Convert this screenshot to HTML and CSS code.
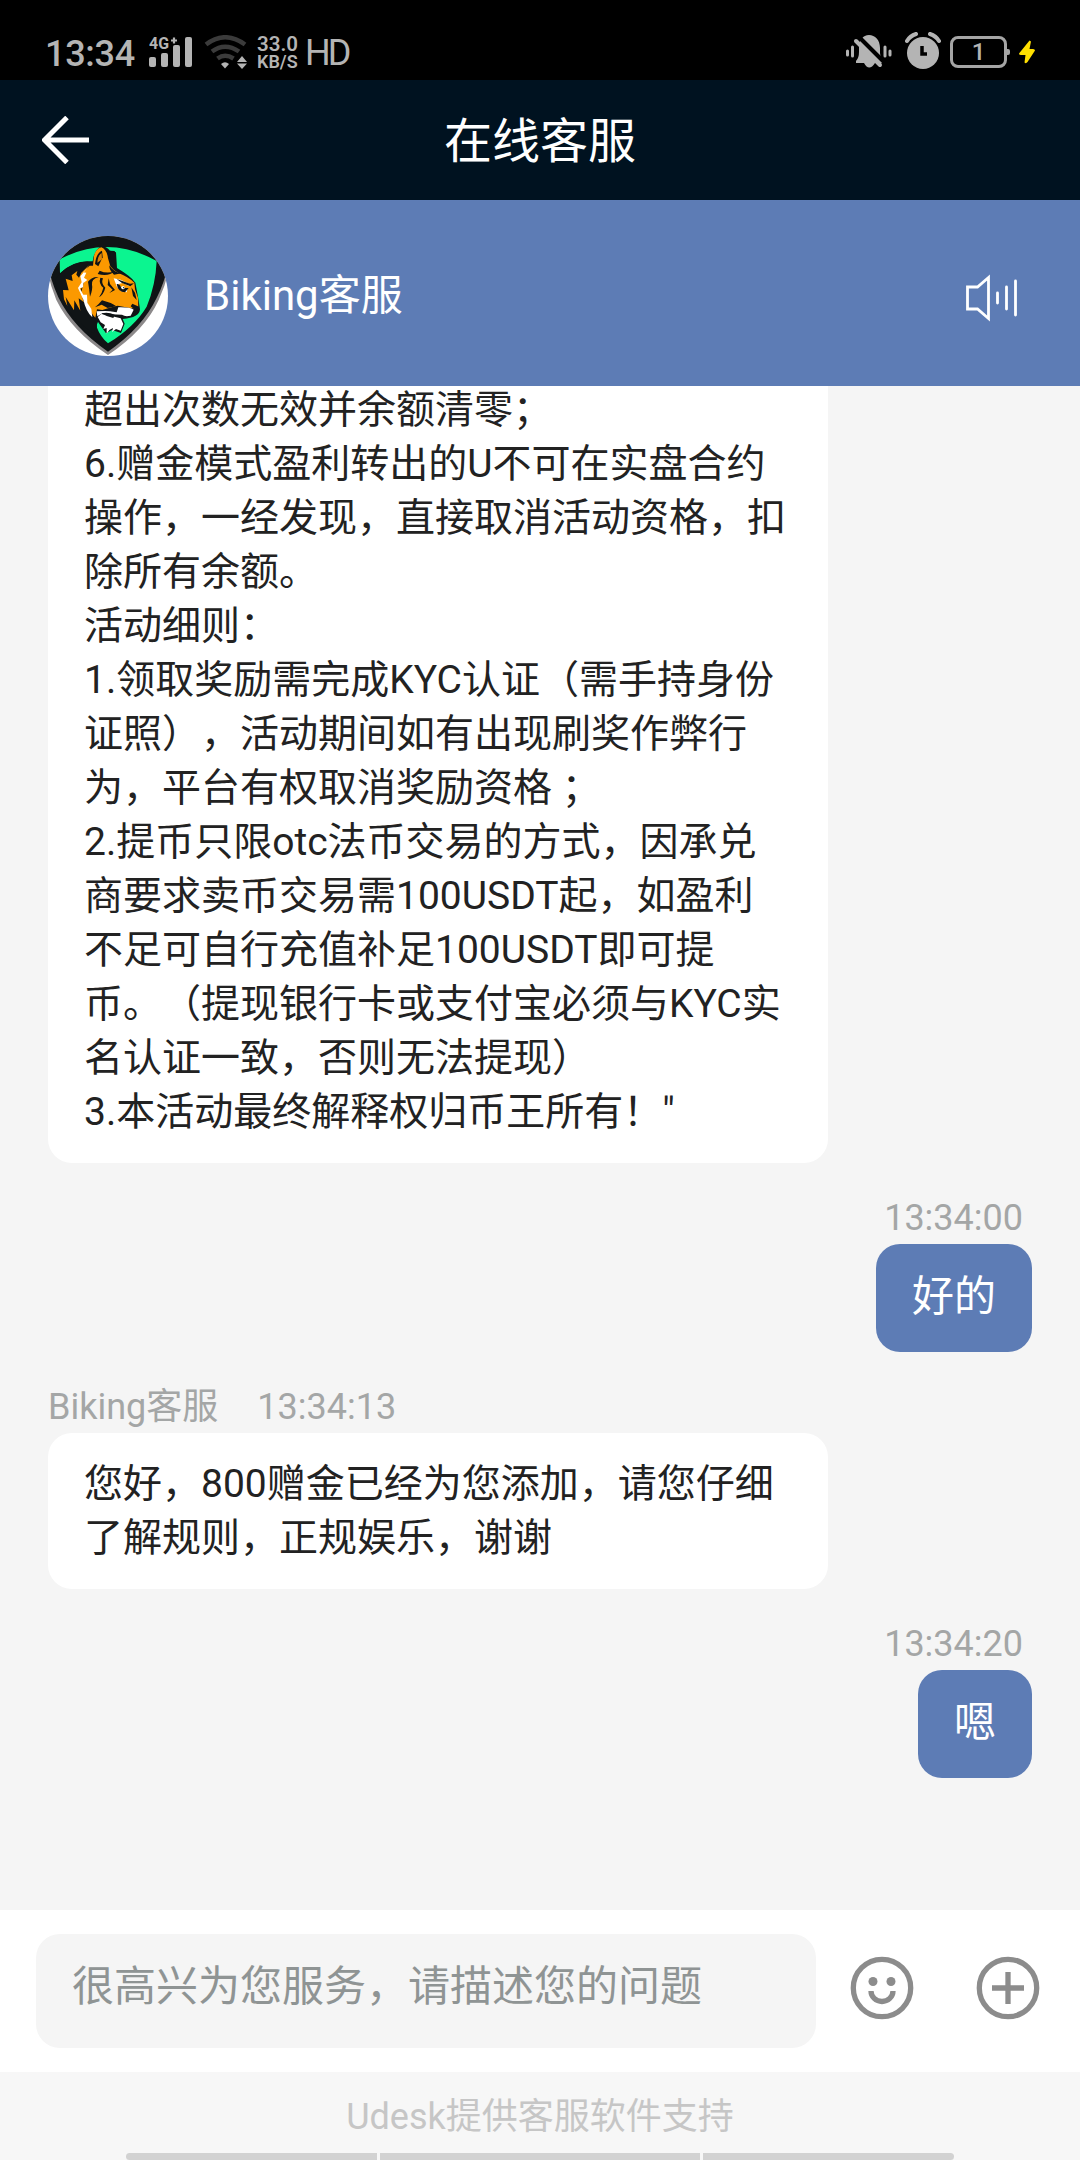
FILE: index.html
```html
<!DOCTYPE html>
<html lang="zh-CN">
<head>
<meta charset="UTF-8" />
<meta name="viewport" content="width=device-width, initial-scale=1" />
<title>在线客服</title>
<link rel="stylesheet" href="styles.css">
</head>
<body>
<div class="page">

<div class="status-bar">
  <span class="clock">13:34</span>
  <svg class="signal" viewBox="0 0 44 34">
    <text x="0" y="13" textLength="20" lengthAdjust="spacingAndGlyphs">4G</text>
    <path d="M22 4.5h6M25 1.5v6" stroke="#b4b4b4" stroke-width="2.2"/>
    <rect x="0" y="21" width="7" height="10" rx="2"/>
    <rect x="12" y="17" width="7" height="14" rx="2"/>
    <rect x="24" y="9" width="7" height="22" rx="2"/>
    <rect x="36" y="1" width="7" height="30" rx="2"/>
  </svg>
  <svg class="wifi" viewBox="0 0 44 34">
    <g fill="none" stroke="#3b3b3b" stroke-width="4.5">
      <path d="M2 9.5Q21 -5 41 9.5"/>
      <path d="M8 16.500Q21 7 35 16.500"/>
      <path d="M13.500 23.500Q21 18 29.500 23.500"/>
    </g>
    <path d="M17 29Q21 25.500 25 29L21 33.500Z"/>
    <path d="M33 27l5-6 5 6zM33 28.500l5 5.500 5-5.500z"/>
  </svg>
  <span class="speed"><span>33.0</span><span>KB/S</span></span>
  <span class="hd">HD</span>
  <span class="status-right">
    <svg class="mute" viewBox="0 0 46 36">
      <path d="M10 28V27Q13 24 13 18V14C13 6 17 1 23 1S34 6 34 14V19Q34 24 37 29H29Q23 38 18 29H10Z"/>
      <path d="M12 2L38 28" stroke="#000" stroke-width="4"/>
      <path d="M10 7L34 31" stroke="#b4b4b4" stroke-width="4" stroke-linecap="round"/>
      <path d="M1.500 17v4M6.500 13v9M39 13v9M44 17v4" stroke="#b4b4b4" stroke-width="3" stroke-linecap="round"/>
    </svg>
    <svg class="alarm" viewBox="0 0 36 37">
      <circle cx="18" cy="21" r="16"/>
      <path d="M2 9Q5 4 11 2M25 2Q31 4 34 9" fill="none" stroke="#b4b4b4" stroke-width="4" stroke-linecap="round"/>
      <path d="M17 14v8h5" fill="none" stroke="#000" stroke-width="3.500"/>
    </svg>
    <span class="battery">1</span>
    <svg class="bolt" viewBox="0 0 16 24"><path d="M10.500 .5L0 13.500Q0 15 2 15H6.500L5.500 22.500Q7 24 8.500 22L16 10.500Q16 9 14 9H10.500L12 1.500Z"/></svg>
  </span>
</div>

<div class="nav">
  <svg class="back" viewBox="0 0 48 48">
    <path d="M25 1.500L2.500 24 25 46.500M3 24h44" fill="none" stroke="#fff" stroke-width="5"/>
  </svg>
  <h1>在线客服</h1>
</div>

<div class="agent">
  <svg class="avatar" viewBox="84 78 360 360">
    <defs><clipPath id="round"><circle cx="264" cy="258" r="180"/></clipPath></defs>
    <g clip-path="url(#round)">
      <rect x="84" y="78" width="360" height="360" fill="#fff"/>
      <!-- 盾牌 -->
      <path d="M80 78H448V165Q441 218 416 270Q374 362 264 435Q154 362 109 270Q86 215 80 160Z" fill="#8c898a"/>
      <path d="M84 78H446V155Q436 211 411 262Q367 354 264 425Q160 354 115 262Q90 207 84 160Z" fill="#101416"/>
      <path d="M119 148Q264 72 410 153Q407 225 380 290Q343 351 264 400Q241 380 231 353L228 250Q175 236 184 174Q195 151 218 154Q160 149 120 190Z" fill="#0bf590"/>
      <!-- 头部 -->
      <path d="M218 154Q157 153 121 190L105 210L119 263Q156 327 220 370L236 331L230 330L244 350L258 370L276 360L303 369L314 341L308 327Q359 323 360 298L354 260L346 218Q333 199 291 174L288 127L270 122Q253 103 237 113Q221 126 218 154Z" fill="#101416"/>
      <path d="M219 167L222 138Q228 115 244 112Q261 119 264 145L271 169Q280 181 295 189Q326 201 343 218L345 238L354 263L355 296L326 293L293 287L269 293L247 300L231 298L226 323Q210 308 198 269L180 258L193 214L190 186L209 167Z" fill="#fb9900"/>
      <path d="M207 166L184 188L177 203L169 194L172 183L155 196L158 213L137 206L146 241L129 240L132 268L142 288L137 261L162 301L163 271L181 302L176 265L192 277L180 244L191 221L186 197Z" fill="#fb9900"/>
      <path d="M225 162Q229 128 246 122L248 142L235 169Z" fill="#101416"/>
      <path d="M232 158Q233 137 245 129L246 148Z" fill="#dc8408"/>
      <path d="M270 122L284 123Q290 139 284 165L273 151Z" fill="#101416"/>
      <path d="M207 169L190 187L199 188L192 203L202 210L190 219L189 232L179 235L190 254L201 254L202 278L214 297L217 322Q198 305 190 269L174 234L185 217L181 199Z" fill="#fff"/>
      <path d="M281 205L302 209L335 225L327 228L308 219L295 222L307 235L322 239L320 247L303 244L291 231Z" fill="#fff"/>
      <path d="M290 207L330 221L342 220L331 229L306 219Z M290 222Q300 221 304 234L326 234L315 247Q294 247 290 222Z" fill="#101416"/>
      <circle cx="309" cy="233" r="5" fill="#fff"/><circle cx="311" cy="233" r="2" fill="#101416"/>
      <g fill="#101416">
        <path d="M239 182Q260 192 285 184Q265 201 233 192Z"/>
        <path d="M268 166Q280 187 305 190L282 194Q267 181 268 166Z"/>
        <path d="M204 215Q216 199 236 201Q213 208 216 224Q219 237 210 260Q208 238 204 215Z"/>
        <path d="M241 203Q235 221 250 233Q246 250 237 262Q251 253 256 233Q242 221 249 205Z"/>
        <path d="M266 205L263 225L278 239L268 249L285 240L270 222Z"/>
        <path d="M246 271Q277 279 289 289L263 294L245 284L225 292Q239 280 246 271Z"/>
        <path d="M334 232L345 248L350 270L339 258Z"/>
        <path d="M337 281L357 290V300L341 296L332 289Z"/>
      </g>
      <path d="M295 292Q330 291 341 299L332 317Q315 321 306 314L272 313L249 309L232 319L230 304L255 303L270 304L290 307Z" fill="#fff"/>
      <path d="M233 321L244 312L263 316L283 320L302 325L310 342L302 362L288 357L276 366L279 354L268 360L260 371L260 354L250 357L255 345L242 337Z" fill="#fff"/>
      <path d="M244 310Q265 305 284 314L280 324L260 318Z" fill="#101416"/>
    </g>
  </svg>
  <span class="agent-name">Biking客服</span>
  <svg class="sound" viewBox="0 0 54 48">
    <path d="M2.500 13H12.500L23.500 3.500V44.500L12.500 35H2.500Z"/>
    <path d="M32.500 19v10M41.500 13v22M50.500 7v34" stroke-linecap="round"/>
  </svg>
</div>

<div class="chat">
  <div class="bubble bubble-cut">超出次数无效并余额清零；<br>
6.赠金模式盈利转出的U不可在实盘合约<br>
操作，一经发现，直接取消活动资格，扣<br>
除所有余额。<br>
活动细则：<br>
1.领取奖励需完成KYC认证（需手持身份<br>
证照），活动期间如有出现刷奖作弊行<br>
为，平台有权取消奖励资格 ；<br>
2.提币只限otc法币交易的方式，因承兑<br>
商要求卖币交易需100USDT起，如盈利<br>
不足可自行充值补足100USDT即可提<br>
币。（提现银行卡或支付宝必须与KYC实<br>
名认证一致，否则无法提现）<br>
3.本活动最终解释权归币王所有！"</div>

  <div class="meta meta-me">13:34:00</div>
  <div class="bubble bubble-me">好的</div>

  <div class="meta"><span>Biking客服</span><span>13:34:13</span></div>
  <div class="bubble">您好，800赠金已经为您添加，请您仔细<br>
了解规则，正规娱乐，谢谢</div>

  <div class="meta meta-me">13:34:20</div>
  <div class="bubble bubble-me">嗯</div>
</div>

<div class="composer">
  <div class="field">很高兴为您服务，请描述您的问题</div>
  <svg class="icon" viewBox="0 0 64 64">
    <circle cx="32" cy="32" r="28.700"/>
    <circle class="eye" cx="23" cy="25.500" r="4.500"/>
    <circle class="eye" cx="41" cy="25.500" r="4.500"/>
    <path d="M21 35a11 10.500 0 0 0 22 0"/>
  </svg>
  <svg class="icon" viewBox="0 0 64 64">
    <circle cx="32" cy="32" r="28.700"/>
    <path d="M16 32h32M32 16v32"/>
  </svg>
</div>

<div class="footer">
  <span>Udesk提供客服软件支持</span>
  <div class="gesture"><i></i><i></i><i></i></div>
</div>

</div>
</body>
</html>
```
FILE: styles.css
```css
body {
  margin: 0;
  background-color: #f5f5f5;
  color: #222;
  font-family: Roboto, "Noto Sans CJK SC", sans-serif;
  text-spacing-trim: space-all;
}
.page {
  width: 1080px;
  height: 2160px;
  display: flex;
  flex-direction: column;
  overflow: hidden;
}
svg {
  display: block;
  flex: none;
}

/* 状态栏 */
.status-bar {
  height: 80px;
  flex: none;
  box-sizing: border-box;
  padding: 26px 45px 0 45px;
  display: flex;
  align-items: flex-start;
  background-color: #000;
  color: #b4b4b4;
  fill: #b4b4b4;
}
.clock {
  width: 104px;
  padding-top: 7px;
  font-size: 36px;
  line-height: 42px;
  font-weight: 500;
  letter-spacing: -0.3px;
}
.signal {
  width: 44px;
  height: 34px;
  padding-top: 10px;
}
.signal text {
  font-size: 16px;
  font-weight: 700;
}
.wifi {
  width: 44px;
  height: 34px;
  margin-left: 11px;
  padding-top: 9px;
}
.speed {
  display: flex;
  flex-direction: column;
  width: 48px;
  margin-left: 9px;
  padding-top: 9px;
  font-size: 18px;
  line-height: 17px;
  font-weight: 600;
}
.speed span:first-child {
  font-size: 20.5px;
  line-height: 18px;
}
.hd {
  padding-top: 6px;
  font-size: 36px;
  line-height: 42px;
  letter-spacing: -3px;
}
.status-right {
  margin-left: auto;
  display: flex;
  align-items: flex-start;
}
.mute {
  width: 46px;
  height: 36px;
  margin: 8px 13px 0 0;
}
.alarm {
  width: 36px;
  height: 37px;
  margin: 6px 9px 0 0;
}
.battery {
  position: relative;
  box-sizing: border-box;
  width: 57px;
  height: 32px;
  margin: 10px 12px 0 0;
  border: 3px solid #a5a5a5;
  border-radius: 8px;
  font-size: 24px;
  line-height: 26px;
  font-weight: 500;
  text-align: center;
}
.battery::after {
  content: "";
  position: absolute;
  top: 10px;
  right: -6px;
  width: 3px;
  height: 6px;
  border-radius: 0 2px 2px 0;
  background-color: #a5a5a5;
}
.bolt {
  width: 16px;
  height: 24px;
  margin-top: 14px;
  fill: #ffdf00;
}

/* 标题栏 */
.nav {
  height: 120px;
  flex: none;
  box-sizing: border-box;
  display: flex;
  align-items: center;
  padding: 0 42px;
  background-color: #001220;
  color: #fff;
}
.back {
  width: 48px;
  height: 48px;
}
.nav h1 {
  flex: 1;
  margin: 0 48px 0 0;
  padding-top: 4px;
  font-size: 48px;
  line-height: 60px;
  font-weight: 400;
  text-align: center;
}
.agent {
  height: 186px;
  flex: none;
  box-sizing: border-box;
  display: flex;
  align-items: center;
  padding: 6px 61px 0 48px;
  background-color: #5d7cb5;
  color: #fff;
}
.avatar {
  width: 120px;
  height: 120px;
}
.agent-name {
  flex: 1;
  margin-left: 36px;
  font-size: 42px;
  line-height: 60px;
}
.sound {
  width: 54px;
  height: 48px;
  margin-top: 4px;
  fill: none;
  stroke: #fff;
  stroke-width: 2.8;
}

/* 聊天记录 */
.chat {
  flex: 1;
  min-height: 0;
  display: flex;
  flex-direction: column;
  align-items: flex-start;
  padding: 0 48px;
  overflow: hidden;
}
.bubble {
  flex: none;
  box-sizing: border-box;
  width: 780px;
  padding: 24px 36px;
  border-radius: 24px;
  background-color: #fff;
  font-size: 39px;
  line-height: 54px;
  white-space: nowrap;
}
.bubble-cut {
  margin-top: -3px;
  padding-top: 0;
  border-radius: 0 0 24px 24px;
}
.bubble-me {
  width: auto;
  align-self: flex-end;
  padding: 23px 36px 25px;
  background-color: #5d7cb5;
  color: #fff;
  font-size: 42px;
  line-height: 60px;
}
.meta {
  flex: none;
  display: flex;
  gap: 39px;
  padding: 34px 0 5px;
  color: #a4a6a6;
  font-size: 36px;
  line-height: 42px;
}
.meta-me {
  align-self: flex-end;
  padding-right: 9px;
}

/* 输入区 */
.composer {
  height: 162px;
  flex: none;
  box-sizing: border-box;
  display: flex;
  align-items: center;
  padding: 0 39px 0 36px;
  background-color: #fff;
}
.field {
  box-sizing: border-box;
  width: 780px;
  height: 114px;
  padding: 23px 36px;
  border-radius: 24px;
  background-color: #f5f5f5;
  color: #8f9494;
  font-size: 42px;
  line-height: 60px;
}
.icon {
  width: 64px;
  height: 64px;
  margin: -6px 0 0 34px;
  fill: none;
  stroke: #8c8c8c;
  stroke-width: 5.3;
}
.icon + .icon {
  margin-left: 62px;
}
.icon .eye {
  fill: #8c8c8c;
  stroke: none;
}

.footer {
  height: 88px;
  flex: none;
  display: flex;
  flex-direction: column;
  align-items: center;
  justify-content: space-between;
  background-color: #f7f7f7;
  color: #c6c6c6;
  font-size: 36px;
  line-height: 42px;
}
.footer span {
  padding-top: 24px;
}
.gesture {
  display: grid;
  grid-template-columns: 251px 320px 251px;
  gap: 3px;
  height: 7px;
}
.gesture i {
  background-color: #d2d2d2;
}
.gesture i:first-child {
  border-radius: 4px 0 0 4px;
}
.gesture i:last-child {
  border-radius: 0 4px 4px 0;
}
```
